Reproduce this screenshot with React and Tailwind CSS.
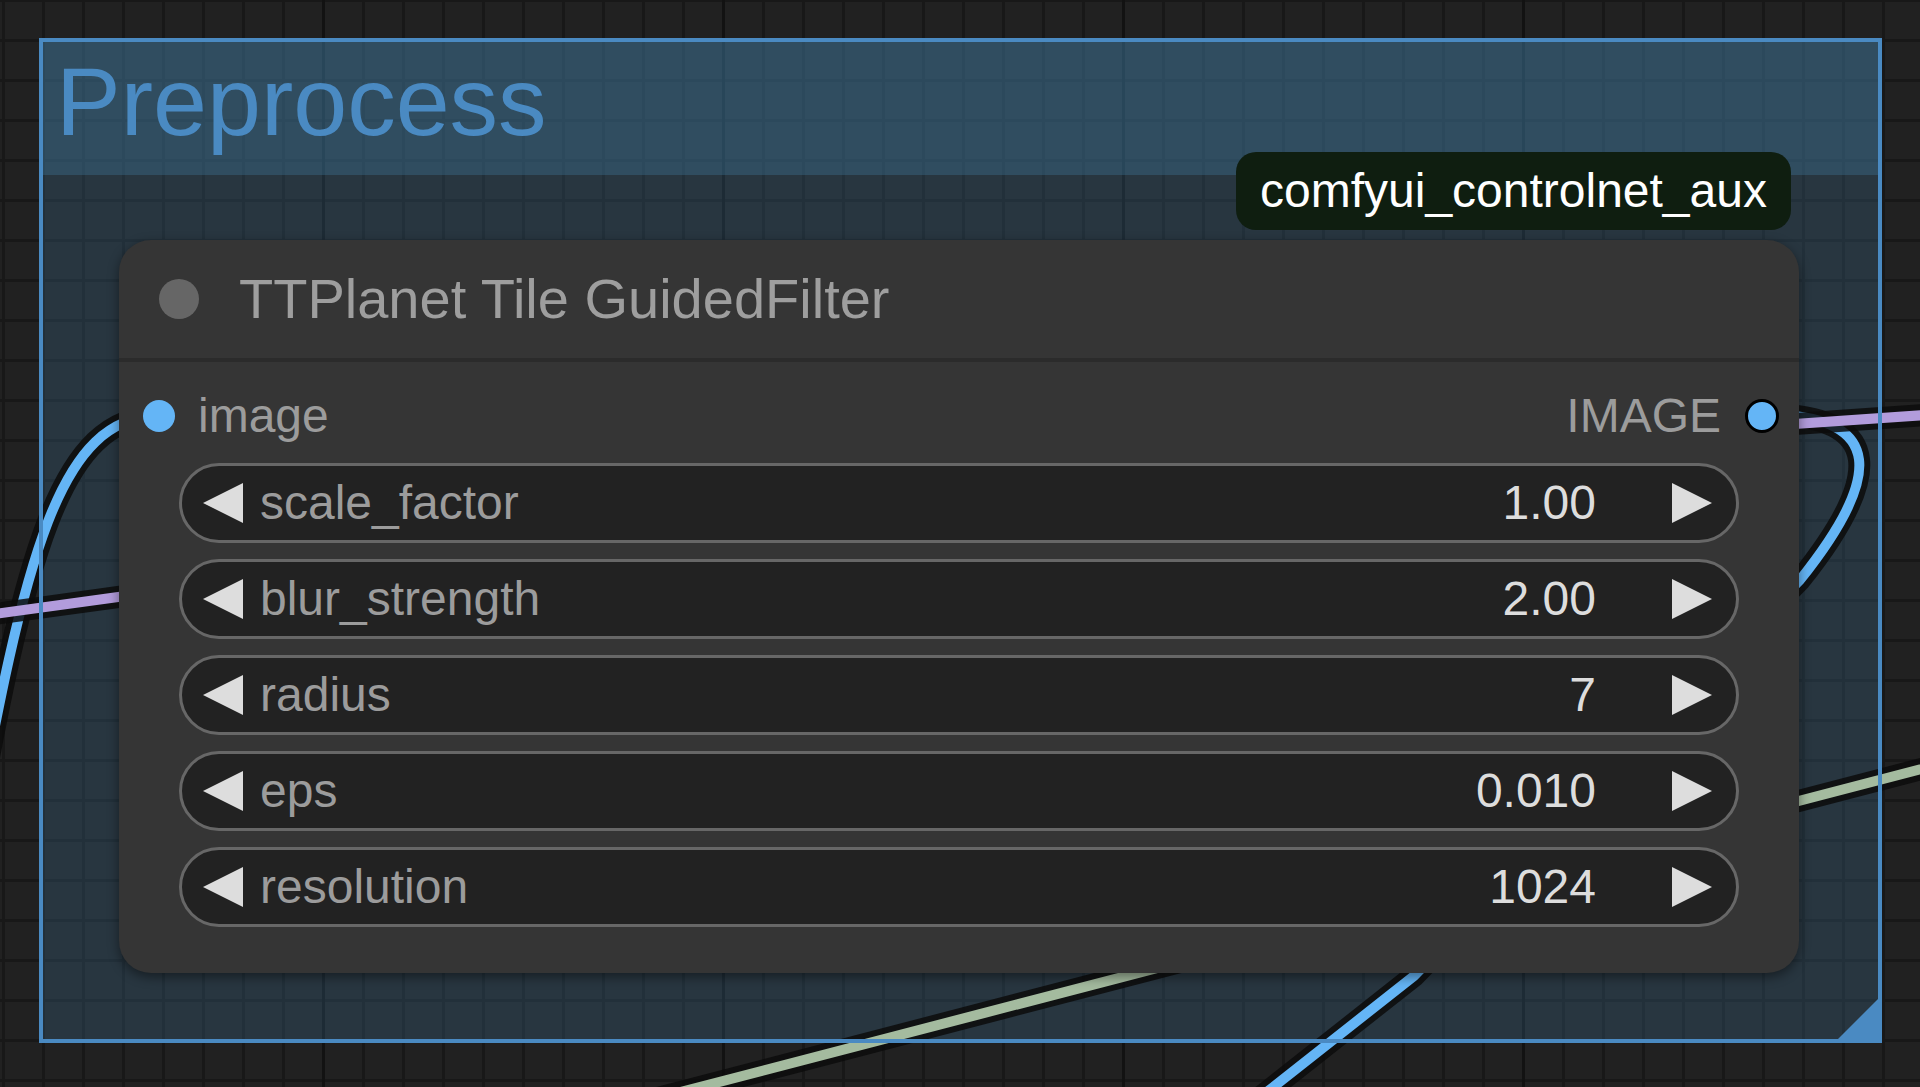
const widgets = [
  { name: 'scale_factor', value: '1.00' },
  { name: 'blur_strength', value: '2.00' },
  { name: 'radius', value: '7' },
  { name: 'eps', value: '0.010' },
  { name: 'resolution', value: '1024' },
]

function Arrow({ dir }) {
  return (
    <svg width="40" height="40" viewBox="0 0 40 40" className="shrink-0">
      <polygon points={dir === 'left' ? '40,0 0,20 40,40' : '0,0 40,20 0,40'} fill="#dddddd" />
    </svg>
  )
}

function NumberWidget({ name, value }) {
  return (
    <div className="flex h-[80px] items-center rounded-full border-[3px] border-[#676767] bg-[#222222] pl-[21px] pr-[24px]">
      <Arrow dir="left" />
      <span className="ml-[17px] text-[#9c9c9c]">{name}</span>
      <span className="ml-auto text-[#dddddd]">{value}</span>
      <span className="ml-[76px] flex">
        <Arrow dir="right" />
      </span>
    </div>
  )
}

function Link({ d, color }) {
  return (
    <g fill="none" strokeLinecap="round">
      <path d={d} stroke="#0c0c0c" strokeOpacity="0.85" strokeWidth="22" />
      <path d={d} stroke={color} strokeWidth="10" />
    </g>
  )
}

function Links() {
  return (
    <svg className="absolute inset-0" width="1920" height="1087" viewBox="0 0 1920 1087">
      <Link d="M 1960 759 L 600 1113" color="#a4bb9f" />
      <Link d="M -30 860 C 25 550, 60 416, 159 416" color="#64b5f6" />
      <Link d="M 1762 414 C 1890 414, 1880 480, 1800 580 L 1414 976 L 1130 1200" color="#64b5f6" />
      <Link d="M -20 616 L 140 594" color="#b29cdc" />
      <Link d="M 1780 425 L 1940 414" color="#b29cdc" />
    </svg>
  )
}

export default function App() {
  return (
    <div className="relative h-[1087px] w-[1920px] overflow-hidden bg-[#212121] bg-[linear-gradient(to_right,#121212_3px,transparent_3px),linear-gradient(to_right,#181818_3px,transparent_3px),linear-gradient(to_bottom,#181818_3px,transparent_3px)] bg-size-[400px_400px,40px_40px,40px_40px] bg-position-[322px_0px,2px_0px,0px_-1px] font-[family-name:'Liberation_Sans',Arial,sans-serif] text-[48px]">
      {/* Group */}
      <div className="absolute left-[39px] top-[38px] h-[1005px] w-[1843px] bg-[#3f789e]/25 p-[4px]">
        <div className="h-[133px] bg-[#3f789e]/35 pl-[13px] pt-[11px]">
          <span className="text-[97px] leading-none text-[#4a8ac2]">Preprocess</span>
        </div>
      </div>

      <Links />

      {/* Group border + resize handle */}
      <div className="absolute left-[39px] top-[38px] h-[1005px] w-[1843px] border-4 border-[#4a8ac2]">
        <svg className="absolute bottom-0 right-0" width="40" height="40" viewBox="0 0 40 40">
          <polygon points="0,40 40,0 40,40" fill="#4a8ac2" />
        </svg>
      </div>

      {/* Badge */}
      <div className="absolute left-[1236px] top-[152px] flex h-[78px] items-center rounded-[20px] bg-[#0f1e10] px-6 text-white">
        comfyui_controlnet_aux
      </div>

      {/* Node */}
      <div className="absolute left-[119px] top-[240px] w-[1680px] rounded-[32px] bg-[#353535] shadow-[0_4px_12px_rgba(0,0,0,0.45)]">
        <div className="flex h-[122px] items-center border-b-4 border-[#2b2b2b] pl-[40px]">
          <div className="h-10 w-10 rounded-full bg-[#666666]" />
          <span className="ml-[40px] text-[56px] text-[#9e9e9e]">TTPlanet Tile GuidedFilter</span>
        </div>

        <div className="pb-[46px] pt-[14px]">
          <div className="flex h-[80px] items-center pl-[24px] pr-[20px]">
            <div className="h-8 w-8 rounded-full bg-[#64b5f6]" />
            <span className="ml-[23px] text-[#9c9c9c]">image</span>
            <span className="ml-auto text-[#9c9c9c]">IMAGE</span>
            <div className="ml-[24px] h-[34px] w-[34px] rounded-full border-[3px] border-black bg-[#64b5f6]" />
          </div>

          <div className="mt-[7px] flex flex-col gap-4 px-[60px]">
            {widgets.map((w) => (
              <NumberWidget key={w.name} name={w.name} value={w.value} />
            ))}
          </div>
        </div>
      </div>
    </div>
  )
}
